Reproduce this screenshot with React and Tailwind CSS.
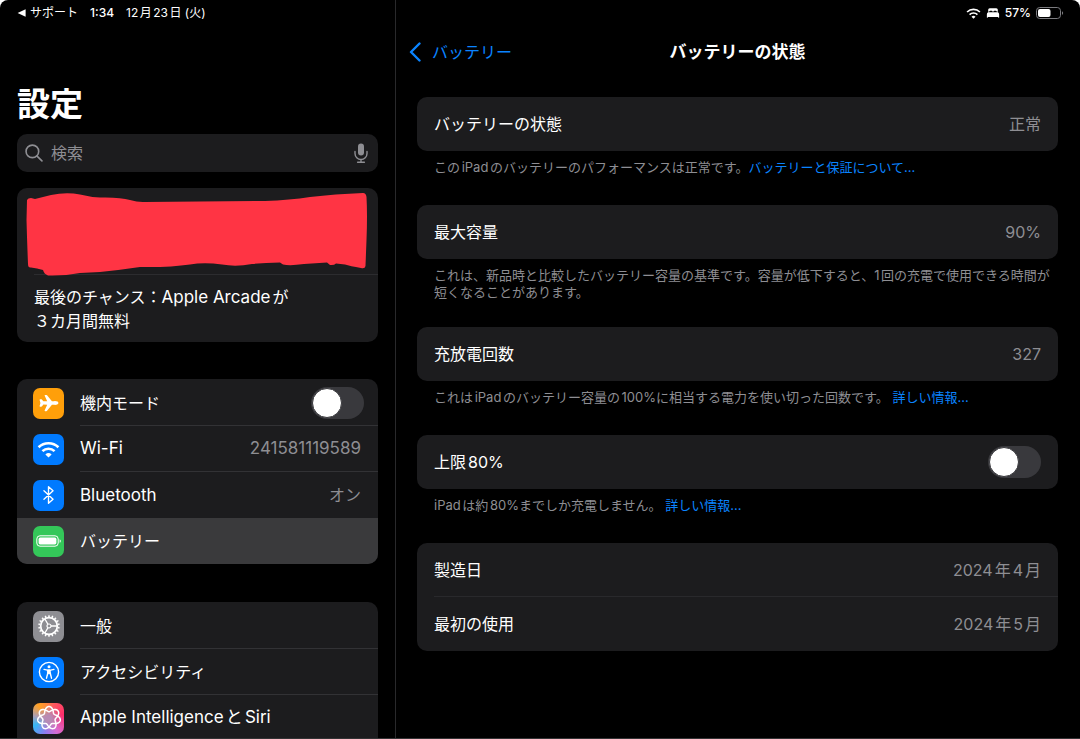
import { useState } from "react";
import { IoAirplane, IoBed } from "react-icons/io5";

function WifiGlyph({ className }) {
  return (
    <svg viewBox="0 0 24 18" className={className} fill="none" stroke="currentColor" strokeWidth="2.7">
      <path d="M1.5 6.6a15 15 0 0 1 21 0" />
      <path d="M5.6 10.8a9.2 9.2 0 0 1 12.8 0" />
      <path d="M12 17.6l-3.3-3.4a4.8 4.8 0 0 1 6.6 0z" fill="currentColor" stroke="none" />
    </svg>
  );
}

function BluetoothGlyph() {
  return (
    <svg viewBox="0 0 14 22" className="h-5 w-[13px]" fill="none" stroke="currentColor" strokeWidth="1.5" strokeLinejoin="round" strokeLinecap="round">
      <path d="M2 6.2l10 9.4-5 4.6V1.8l5 4.6-10 9.4" />
    </svg>
  );
}

function BatteryGlyph() {
  return (
    <svg viewBox="0 0 26 12" className="h-3 w-[26px]" fill="none">
      <rect x="0.8" y="0.8" width="21.4" height="10.4" rx="3.2" stroke="currentColor" strokeWidth="1" />
      <rect x="2.6" y="2.6" width="17.8" height="6.8" rx="1.6" fill="currentColor" />
      <path d="M23.6 4.2c1.6.5 1.6 3.1 0 3.6z" fill="currentColor" />
    </svg>
  );
}

const teeth = Array.from({ length: 18 }, (_, i) => i * 20);

function GearGlyph() {
  return (
    <svg viewBox="-12 -12 24 24" className="size-6" fill="none" stroke="currentColor">
      <circle r="8.3" strokeWidth="1.7" />
      {teeth.map((deg) => (
        <path key={deg} d="M-.9 -8.8L-.5 -10.8H.5L.9 -8.8z" fill="currentColor" strokeWidth="0.2" transform={`rotate(${deg})`} />
      ))}
      <circle r="2" strokeWidth="1.2" />
      <path d="M2 0H8M-1 1.7L-4.1 7M-1 -1.7L-4.1 -7" strokeWidth="1.3" />
    </svg>
  );
}

function AccessibilityGlyph() {
  return (
    <svg viewBox="-12 -12 24 24" className="size-6" fill="none" stroke="currentColor" strokeLinecap="round" strokeLinejoin="round">
      <circle r="9.6" strokeWidth="1.4" />
      <circle cy="-5.2" r="1.5" fill="currentColor" stroke="none" />
      <path d="M-5 -2.6L-1.5 -1.9H1.5L5 -2.6" strokeWidth="1.3" />
      <path d="M-1.2 -2H1.2V1.2L0 2L-1.2 1.2z" fill="currentColor" strokeWidth="1" />
      <path d="M-1.2 1L-2.5 6.2M1.2 1L2.5 6.2" strokeWidth="1.4" />
    </svg>
  );
}

// seven interlaced lobes, closed after two turns
const knot = Array.from({ length: 241 }, (_, i) => {
  const t = (i / 240) * Math.PI * 4;
  const r = 8.2 + 2.4 * Math.cos(3.5 * t);
  return `${i ? "L" : "M"}${(r * Math.sin(t)).toFixed(2)} ${(-r * Math.cos(t)).toFixed(2)}`;
}).join("");

function IntelligenceGlyph() {
  return (
    <svg viewBox="-12 -12 24 24" className="size-[26px]" fill="none" stroke="currentColor" strokeWidth="1.4">
      <path d={knot} />
    </svg>
  );
}

function SearchGlyph() {
  return (
    <svg viewBox="0 0 20 20" className="size-[18px] shrink-0" fill="none" stroke="currentColor" strokeWidth="1.8" strokeLinecap="round">
      <circle cx="8.2" cy="8.2" r="7" />
      <path d="M13.4 13.4l5.4 5.4" />
    </svg>
  );
}

function MicGlyph() {
  return (
    <svg viewBox="0 0 16 22" className="h-[22px] w-4" fill="none" stroke="currentColor" strokeWidth="1.4" strokeLinecap="round">
      <rect x="5" y="1.4" width="6" height="12.2" rx="3" fill="currentColor" stroke="none" />
      <path d="M2 9.5v2a6 6 0 0 0 12 0v-2M8 17.5v2.6M4.6 20.2h6.8" />
    </svg>
  );
}

function StatusBattery() {
  return (
    <svg viewBox="0 0 28 12" className="h-3 w-7" fill="none">
      <rect x="0.5" y="0.5" width="24" height="11" rx="3.2" stroke="#7c7c80" />
      <rect x="2" y="2" width="12.5" height="8" rx="2" fill="white" />
      <path d="M26 4.2c1.5.5 1.5 3.1 0 3.6z" fill="#7c7c80" />
    </svg>
  );
}

function Toggle({ id, checked, onChange }) {
  return (
    <input
      id={id}
      type="checkbox"
      role="switch"
      checked={checked}
      onChange={(e) => onChange(e.target.checked)}
      className="h-8 w-[53px] shrink-0 appearance-none rounded-full bg-[#39393d] p-px transition-colors before:block before:size-[30px] before:rounded-full before:border before:border-[#39393d] before:bg-white before:transition-transform checked:bg-[#30d158] checked:before:translate-x-5"
    />
  );
}

function Tile({ className, children }) {
  return (
    <span className={`flex size-[31px] shrink-0 items-center justify-center rounded-[7px] text-white ${className}`}>
      {children}
    </span>
  );
}

function NavRow({ icon, tile, label, value, selected, last, latin }) {
  return (
    <a href="#" aria-current={selected ? "page" : undefined} className={`flex h-[46px] items-center gap-4 pl-4 ${selected ? "bg-[#3a3a3c]" : ""}`}>
      <Tile className={tile}>{icon}</Tile>
      <span className={`flex flex-1 items-center justify-between self-stretch pr-[17px] ${last ? "" : "border-b border-[#323235]"}`}>
        <span className={latin ? "text-[17px] leading-[27px]" : ""}>{label}</span>
        {value && <span className={`text-[#8e8e93] ${/^\d+$/.test(value) ? "text-[17px] leading-[27px]" : ""}`}>{value}</span>}
      </span>
    </a>
  );
}

function Sidebar() {
  const [airplane, setAirplane] = useState(false);

  return (
    <aside className="flex w-[396px] shrink-0 flex-col border-r border-[#29292b] px-[17px]">
      <div className="flex h-[26px] shrink-0 items-center text-xs">
        <button className="flex items-center gap-1">
          <svg viewBox="0 0 9 8" className="h-2 w-[9px]" fill="currentColor">
            <path d="M.6 4L8.6.2v7.6z" />
          </svg>
          サポート
        </button>
        <span className="ml-3 font-medium">1:34</span>
        <span className="ml-3">12月23日 (火)</span>
      </div>

      <h1 className="mt-[54px] text-[33px] leading-[48px] font-bold">設定</h1>

      <div className="mt-[6px] flex h-[38px] shrink-0 items-center gap-2 rounded-[10px] bg-[#1c1c1e] pr-[9px] pl-2 text-[#8e8e93]">
        <SearchGlyph />
        <input type="search" aria-label="検索" placeholder="検索" className="min-w-0 flex-1 bg-transparent outline-none placeholder:text-[#8e8e93]" />
        <button aria-label="音声入力">
          <MicGlyph />
        </button>
      </div>

      <section className="mt-4 shrink-0 rounded-[10px] bg-[#1c1c1e]">
        <div className="ml-[17px] h-[87px] border-b border-[#2c2c2f]">
          <svg viewBox="17 188 361 87" className="-ml-[17px] h-[87px] w-[361px] max-w-none overflow-visible" fill="#ff3444" aria-hidden="true">
            <path d="M27 200Q28 198 31 198L35 199Q43 197 51 195Q66 192 80 194.500Q90 197 100 197.500Q120 197 130 200Q138 202.500 145 202L200 201.500L265 201Q290 200 310 197Q335 194 363 193Q366 193 366.500 197Q367.500 215 366.500 240L365.500 266Q365 269 361 268Q350 266 345 264.500L336 263.500Q334 265.500 330 265L327 262.500L304 264Q290 266 283 264.500L280 262.500Q264 263 252 264Q236 267 222 264.500Q204 262 190 264.500Q170 267.500 140 267Q120 270 100 272L80 273Q64 276 48 275.500Q44 274 43 270L37 268.500L31 267.500Q28 268 28 264Q27 240 26.500 220Z" />
          </svg>
        </div>
        <a href="#" className="block px-[17px] pt-[10px] pb-[9px] leading-6">
          最後のチャンス：<span className="text-[17px]">Apple Arcade</span>が
          <br />
          ３カ月間無料
        </a>
      </section>

      <nav className="mt-[37px] shrink-0 overflow-hidden rounded-[10px] bg-[#1c1c1e] pt-px">
        <div className="flex h-[46px] items-center gap-4 pl-4">
          <Tile className="bg-[#ff9f0a]">
            <IoAirplane className="size-5" />
          </Tile>
          <div className="flex flex-1 items-center justify-between self-stretch border-b border-[#323235] pr-[14px]">
            <label htmlFor="airplane">機内モード</label>
            <Toggle id="airplane" checked={airplane} onChange={setAirplane} />
          </div>
        </div>
        <NavRow icon={<WifiGlyph className="h-[17px] w-[23px]" />} tile="bg-[#007aff]" label="Wi-Fi" value="241581119589" latin />
        <NavRow icon={<BluetoothGlyph />} tile="bg-[#007aff]" label="Bluetooth" value="オン" latin last />
        <NavRow icon={<BatteryGlyph />} tile="bg-[#34c759]" label="バッテリー" selected last />
      </nav>

      <nav className="mt-[38px] shrink-0 overflow-hidden rounded-t-[10px] bg-[#1c1c1e] pt-px">
        <NavRow icon={<GearGlyph />} tile="bg-[#8e8e93]" label="一般" />
        <NavRow icon={<AccessibilityGlyph />} tile="bg-[#007aff]" label="アクセシビリティ" />
        <NavRow
          icon={<IntelligenceGlyph />}
          tile="bg-[radial-gradient(circle,#b88bb4_15%,transparent_60%),conic-gradient(from_20deg,#ff5a5f,#ff2d6b_15%,#d86bd0_35%,#8f7bf0_48%,#35b8f5_62%,#a9a0b8_72%,#ffa024_84%,#ff8a3c_92%,#ff5a5f)]"
          label="Apple IntelligenceとSiri"
          latin
        />
      </nav>
    </aside>
  );
}

function Card({ children }) {
  return <div className="rounded-[10px] bg-[#1c1c1e] pl-[17px]">{children}</div>;
}

function InfoRow({ label, value, divider }) {
  return (
    <div className={`flex h-[54px] items-center justify-between pr-[17px] ${divider ? "border-b border-[#29292c]" : ""}`}>
      <span>{label}</span>
      <span className="text-[#8e8e93]">{value}</span>
    </div>
  );
}

function Footnote({ children }) {
  return <p className="min-h-[54px] pt-2 pb-[26px] pl-[17px] text-[13px] leading-[17px] text-[#8e8e93]">{children}</p>;
}

function FootLink({ children }) {
  return (
    <a href="#" className="text-[#0a84ff]">
      {children}
    </a>
  );
}

function BatteryHealth() {
  const [limit, setLimit] = useState(false);

  return (
    <main className="flex min-w-0 flex-1 flex-col">
      <div className="flex h-[26px] shrink-0 items-center justify-end gap-[5px] pr-4 text-xs font-medium">
        <WifiGlyph className="h-[11px] w-[15px]" />
        <IoBed className="size-[14px]" />
        <span>57%</span>
        <StatusBattery />
      </div>

      <header className="grid h-[52px] grid-cols-[1fr_auto_1fr] items-center pr-[22px] pl-[21px]">
        <button className="-ml-2 flex items-center gap-[11px] justify-self-start text-[#0a84ff]">
          <svg viewBox="0 0 12 20" className="h-5 w-3" fill="none" stroke="currentColor" strokeWidth="2.4" strokeLinecap="round" strokeLinejoin="round">
            <path d="M10.500 1.500L2 10l8.500 8.500" />
          </svg>
          バッテリー
        </button>
        <h2 className="text-[17px] leading-[27px] font-bold">バッテリーの状態</h2>
      </header>

      <div className="mt-[19px] pr-[22px] pl-[21px]">
        <Card>
          <InfoRow label="バッテリーの状態" value="正常" />
        </Card>
        <Footnote>
          このiPadのバッテリーのパフォーマンスは正常です。<FootLink>バッテリーと保証について...</FootLink>
        </Footnote>

        <Card>
          <InfoRow label="最大容量" value="90%" />
        </Card>
        <Footnote>
          これは、新品時と比較したバッテリー容量の基準です。容量が低下すると、1回の充電で使用できる時間が短くなることがあります。
        </Footnote>

        <Card>
          <InfoRow label="充放電回数" value="327" />
        </Card>
        <Footnote>
          これはiPadのバッテリー容量の100%に相当する電力を使い切った回数です。 <FootLink>詳しい情報...</FootLink>
        </Footnote>

        <Card>
          <div className="flex h-[54px] items-center justify-between pr-[17px]">
            <label htmlFor="limit">上限80%</label>
            <Toggle id="limit" checked={limit} onChange={setLimit} />
          </div>
        </Card>
        <Footnote>
          iPadは約80%までしか充電しません。 <FootLink>詳しい情報...</FootLink>
        </Footnote>

        <Card>
          <InfoRow label="製造日" value="2024年4月" divider />
          <InfoRow label="最初の使用" value="2024年5月" />
        </Card>
      </div>
    </main>
  );
}

export default function App() {
  return (
    <div lang="ja" className="h-screen bg-white">
      <div className="flex h-full overflow-hidden rounded-t-lg border-b border-[#333335] bg-black font-[Inter,'Noto_Sans_CJK_JP',sans-serif] text-base text-white [text-autospace:normal]">
        <Sidebar />
        <BatteryHealth />
      </div>
    </div>
  );
}
